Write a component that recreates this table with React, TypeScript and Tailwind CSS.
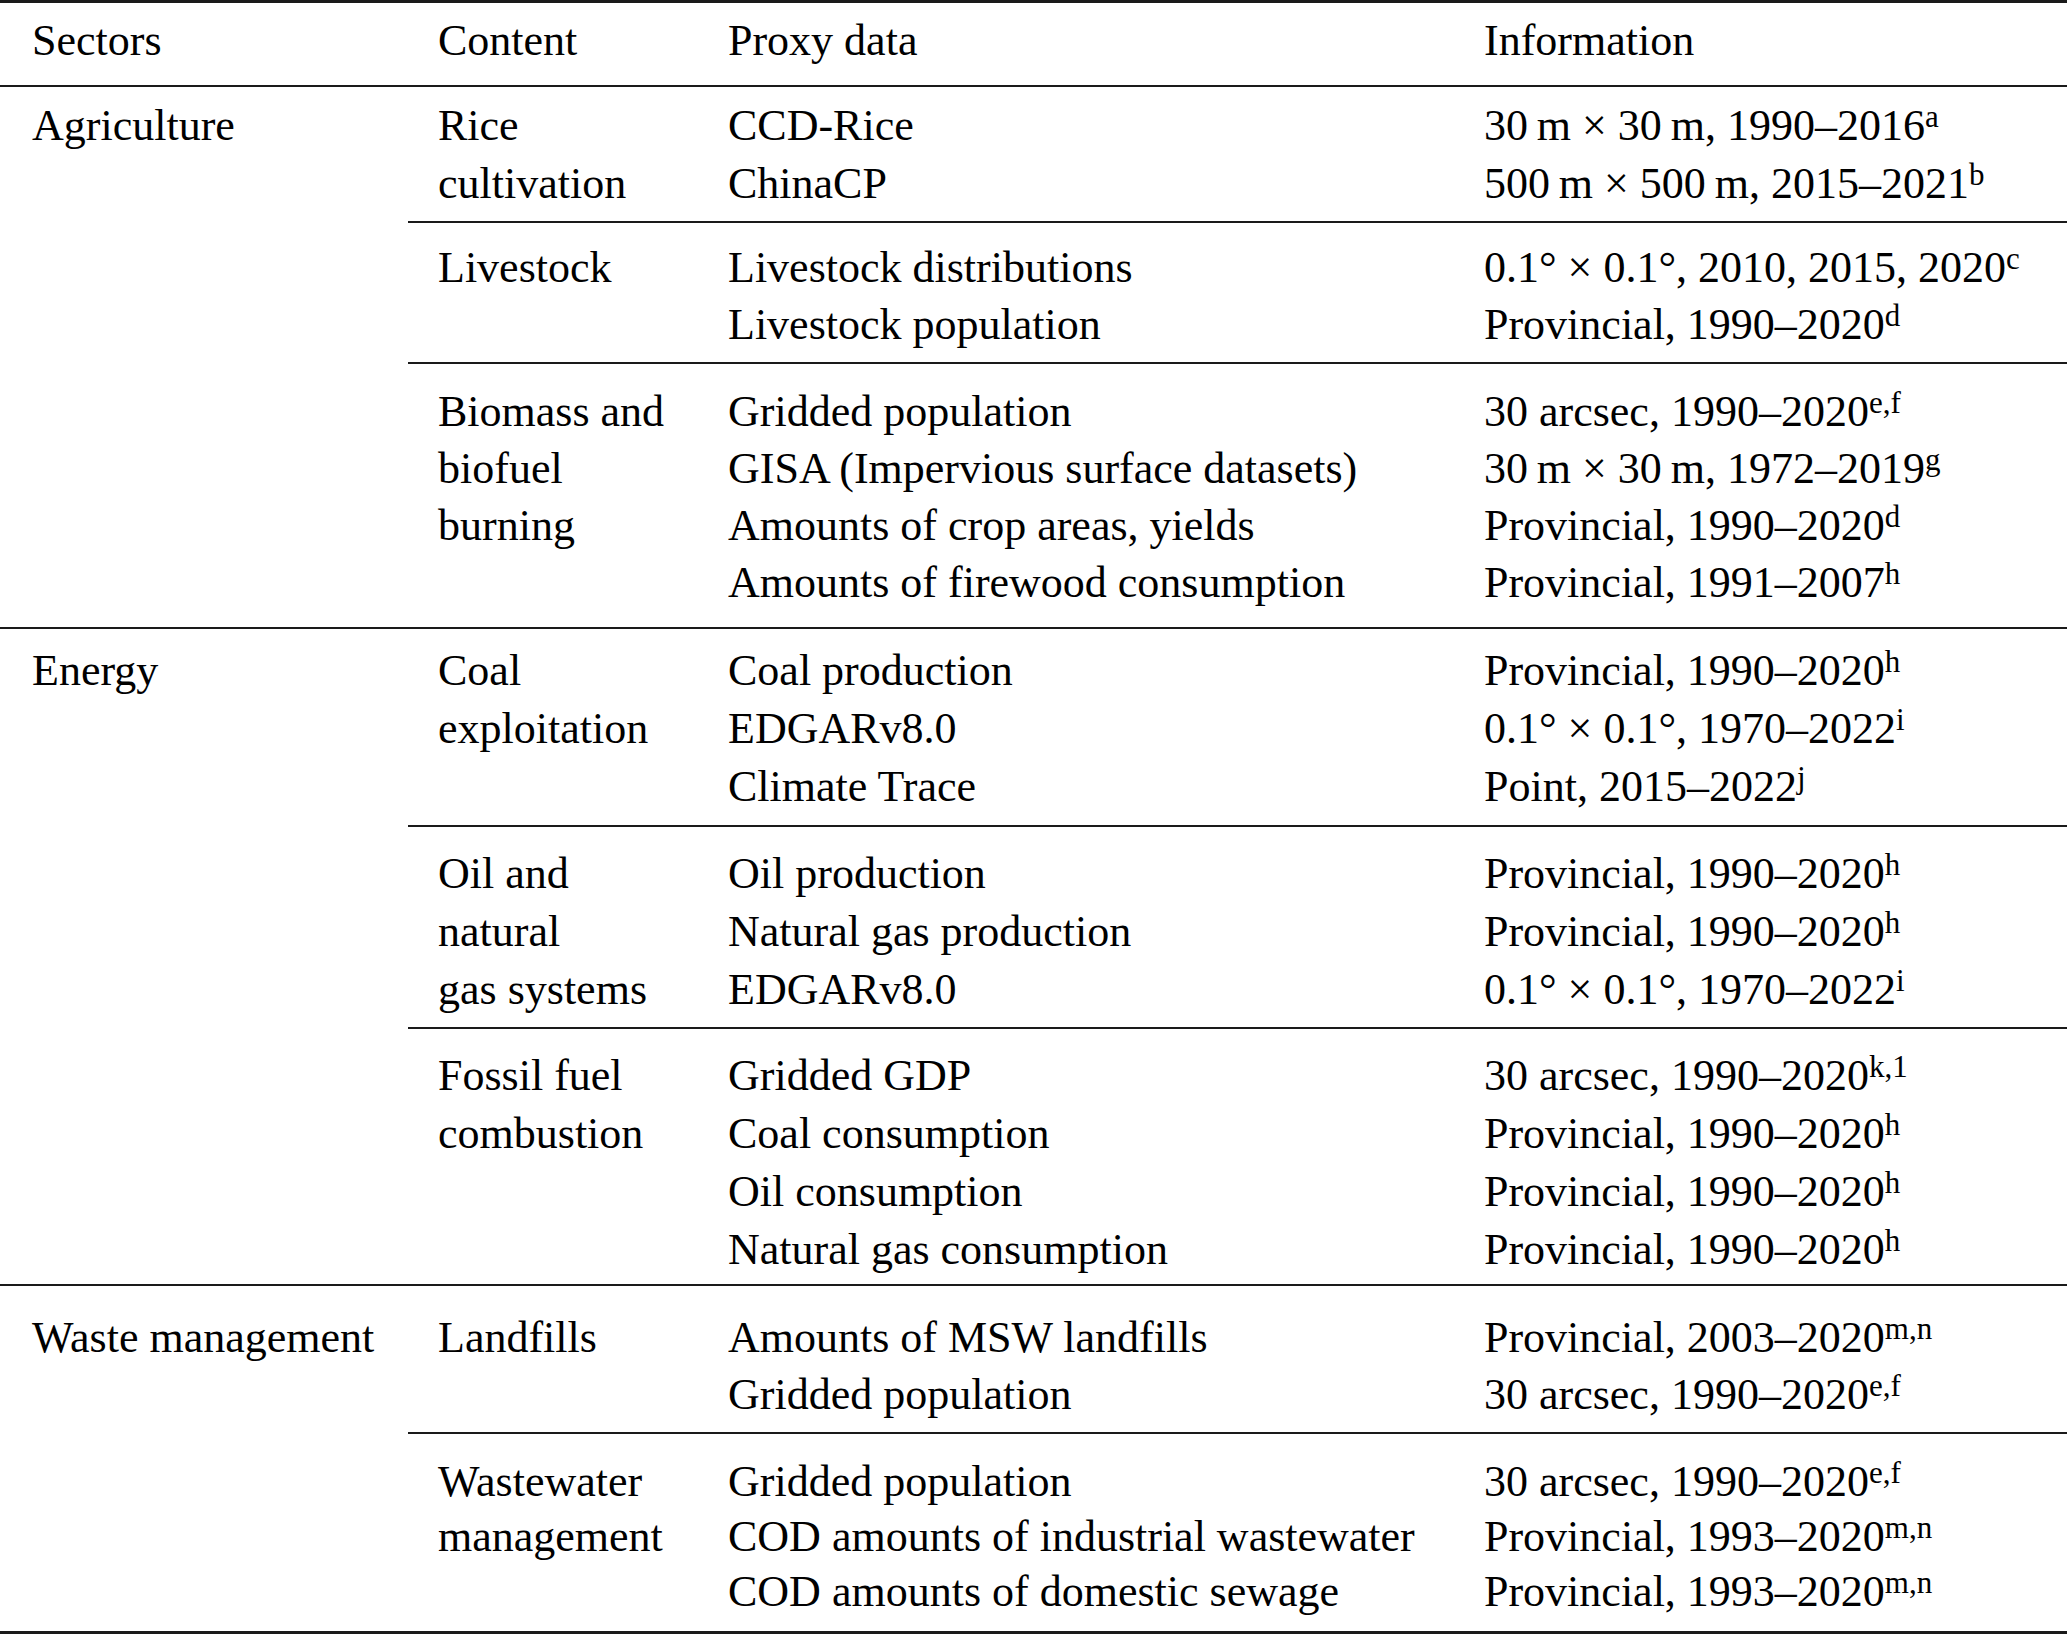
type Row = [string, string, string]

interface Sub {
  pad: string
  lh: string
  content: string[]
  rows: Row[]
}

interface Group {
  sector: string
  subs: Sub[]
}

const groups: Group[] = [
  {
    sector: "Agriculture",
    subs: [
      {
        pad: "pt-[10px] pb-[8px]",
        lh: "leading-[58px]",
        content: ["Rice", "cultivation"],
        rows: [
          ["CCD-Rice", "30\u2009m × 30\u2009m, 1990–2016", "a"],
          ["ChinaCP", "500\u2009m × 500\u2009m, 2015–2021", "b"],
        ],
      },
      {
        pad: "pt-[16px] pb-[9px]",
        lh: "leading-[57px]",
        content: ["Livestock"],
        rows: [
          ["Livestock distributions", "0.1° × 0.1°, 2010, 2015, 2020", "c"],
          ["Livestock population", "Provincial, 1990–2020", "d"],
        ],
      },
      {
        pad: "pt-[19px] pb-[16px]",
        lh: "leading-[57px]",
        content: ["Biomass and", "biofuel", "burning"],
        rows: [
          ["Gridded population", "30 arcsec, 1990–2020", "e,f"],
          ["GISA (Impervious surface datasets)", "30\u2009m × 30\u2009m, 1972–2019", "g"],
          ["Amounts of crop areas, yields", "Provincial, 1990–2020", "d"],
          ["Amounts of firewood consumption", "Provincial, 1991–2007", "h"],
        ],
      },
    ],
  },
  {
    sector: "Energy",
    subs: [
      {
        pad: "pt-[13px] pb-[9px]",
        lh: "leading-[58px]",
        content: ["Coal", "exploitation"],
        rows: [
          ["Coal production", "Provincial, 1990–2020", "h"],
          ["EDGARv8.0", "0.1° × 0.1°, 1970–2022", "i"],
          ["Climate Trace", "Point, 2015–2022", "j"],
        ],
      },
      {
        pad: "pt-[18px] pb-[8px]",
        lh: "leading-[58px]",
        content: ["Oil and", "natural", "gas systems"],
        rows: [
          ["Oil production", "Provincial, 1990–2020", "h"],
          ["Natural gas production", "Provincial, 1990–2020", "h"],
          ["EDGARv8.0", "0.1° × 0.1°, 1970–2022", "i"],
        ],
      },
      {
        pad: "pt-[18px] pb-[5px]",
        lh: "leading-[58px]",
        content: ["Fossil fuel", "combustion"],
        rows: [
          ["Gridded GDP", "30 arcsec, 1990–2020", "k,1"],
          ["Coal consumption", "Provincial, 1990–2020", "h"],
          ["Oil consumption", "Provincial, 1990–2020", "h"],
          ["Natural gas consumption", "Provincial, 1990–2020", "h"],
        ],
      },
    ],
  },
  {
    sector: "Waste management",
    subs: [
      {
        pad: "pt-[23px] pb-[9px]",
        lh: "leading-[57px]",
        content: ["Landfills"],
        rows: [
          ["Amounts of MSW landfills", "Provincial, 2003–2020", "m,n"],
          ["Gridded population", "30 arcsec, 1990–2020", "e,f"],
        ],
      },
      {
        pad: "pt-[20px] pb-[12px]",
        lh: "leading-[55px]",
        content: ["Wastewater", "management"],
        rows: [
          ["Gridded population", "30 arcsec, 1990–2020", "e,f"],
          ["COD amounts of industrial wastewater", "Provincial, 1993–2020", "m,n"],
          ["COD amounts of domestic sewage", "Provincial, 1993–2020", "m,n"],
        ],
      },
    ],
  },
]

function SubBlock({ sub, first }: { sub: Sub; first: boolean }) {
  return (
    <div className={`flex ${sub.pad} ${sub.lh} ${first ? "" : "border-t-2 border-[#1a1a1a]"}`}>
      <div className="w-[290px] pl-[30px] flex flex-col">
        {sub.content.map((c) => (
          <span key={c} className="whitespace-nowrap">{c}</span>
        ))}
      </div>
      <div className="w-[756px] pl-[30px] flex flex-col">
        {sub.rows.map((r, i) => (
          <span key={i} className="whitespace-nowrap">{r[0]}</span>
        ))}
      </div>
      <div className="flex-1 pl-[30px] flex flex-col">
        {sub.rows.map((r, i) => (
          <span key={i} className="whitespace-nowrap">
            {r[1]}
            <sup className="text-[31px] top-[-13px]">{r[2]}</sup>
          </span>
        ))}
      </div>
    </div>
  )
}

export default function App() {
  return (
    <div className="w-[2067px] min-h-[1637px] bg-white text-black text-[44px] font-['Liberation_Serif','Times_New_Roman',serif]">
      <div className="border-t-[3px] border-b-2 border-[#1a1a1a] flex pt-[9px] pb-[16px] leading-[57px]">
        <div className="w-[408px] pl-[32px]">Sectors</div>
        <div className="w-[290px] pl-[30px]">Content</div>
        <div className="w-[756px] pl-[30px]">Proxy data</div>
        <div className="flex-1 pl-[30px]">Information</div>
      </div>
      {groups.map((g, gi) => (
        <div
          key={g.sector}
          className={`flex ${gi > 0 ? "border-t-2" : ""} ${gi === groups.length - 1 ? "border-b-[3px]" : ""} border-[#1a1a1a]`}
        >
          <div className={`w-[408px] pl-[32px] whitespace-nowrap ${g.subs[0].pad} ${g.subs[0].lh}`}>{g.sector}</div>
          <div className="flex-1 flex flex-col">
            {g.subs.map((s, si) => (
              <SubBlock key={si} sub={s} first={si === 0} />
            ))}
          </div>
        </div>
      ))}
    </div>
  )
}
